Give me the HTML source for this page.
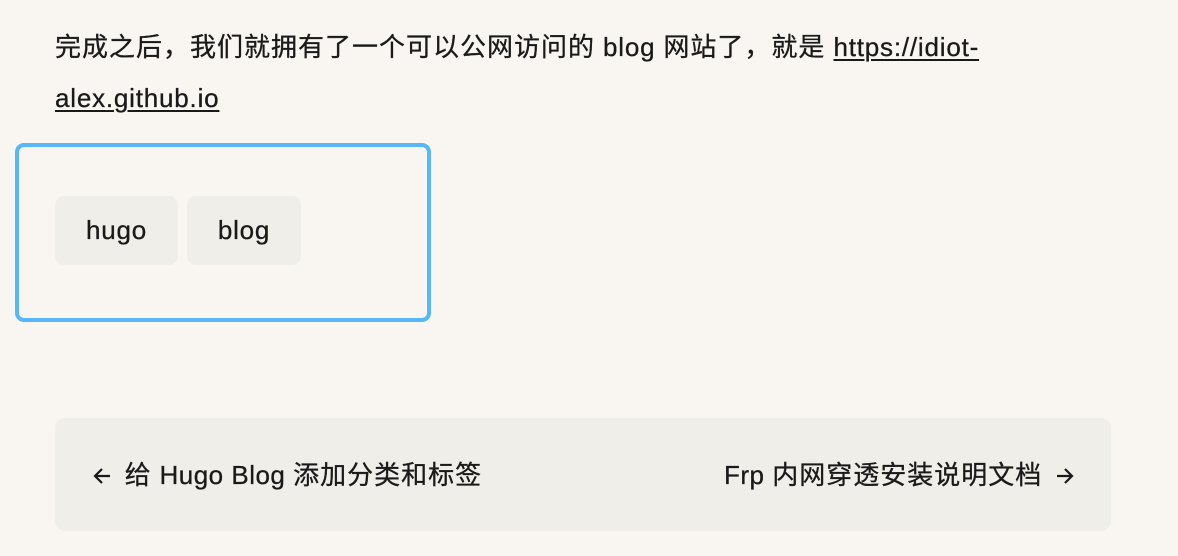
<!DOCTYPE html>
<html><head><meta charset="utf-8"><style>
html,body{margin:0;padding:0;background:#f9f6f1;width:1178px;height:556px;overflow:hidden;font-family:"Liberation Sans","Noto Sans CJK SC",sans-serif;color:#1a1a1a;-webkit-text-stroke:0.3px #1a1a1a}
.p{position:absolute;left:55px;top:22px;font-size:26px;line-height:51px;width:1000px;letter-spacing:0.8px;white-space:nowrap}
.c{letter-spacing:1px}
a{color:#1a1a1a;text-decoration:underline;text-underline-offset:3px;text-decoration-thickness:2px}
.box{position:absolute;left:15px;top:143px;width:408px;height:171px;border:4px solid #56b7f9;border-radius:9px}
.tag{position:absolute;top:196px;height:69px;background:#f0eee9;border-radius:9px;font-size:26px;line-height:69px;text-align:center;letter-spacing:0.8px}
.nav{position:absolute;left:55px;top:418px;width:1056px;height:113px;background:#f0eee9;border-radius:10px;font-size:26px;letter-spacing:0.5px}
.nav span{position:absolute;top:41px;line-height:32px;white-space:nowrap}
.nav span span{position:static}
svg{vertical-align:-2px;width:20px;height:20px}
</style></head><body>
<div class="p"><span class="c">完成之后，我们就拥有了一个可以公网访问的</span> blog <span class="c">网站了，就是</span> <a>https://idiot-</a><br><a>alex.github.io</a></div>
<div class="box"></div>
<div class="tag" style="left:55px;width:123px">hugo</div>
<div class="tag" style="left:187px;width:114px">blog</div>
<div class="nav">
<span style="left:37px"><svg viewBox="0 0 20 20" style="margin-right:5px"><path d="M18 10H3M10 3L3 10l7 7" fill="none" stroke="#1a1a1a" stroke-width="2.2"/></svg> <span class="c">给</span> Hugo Blog <span class="c">添加分类和标签</span></span>
<span style="right:36px">Frp <span class="c">内网穿透安装说明文档</span> <svg viewBox="0 0 20 20" style="margin-left:5px"><path d="M2 10h15M10 3l7 7-7 7" fill="none" stroke="#1a1a1a" stroke-width="2.2"/></svg></span>
</div>
</body></html>
